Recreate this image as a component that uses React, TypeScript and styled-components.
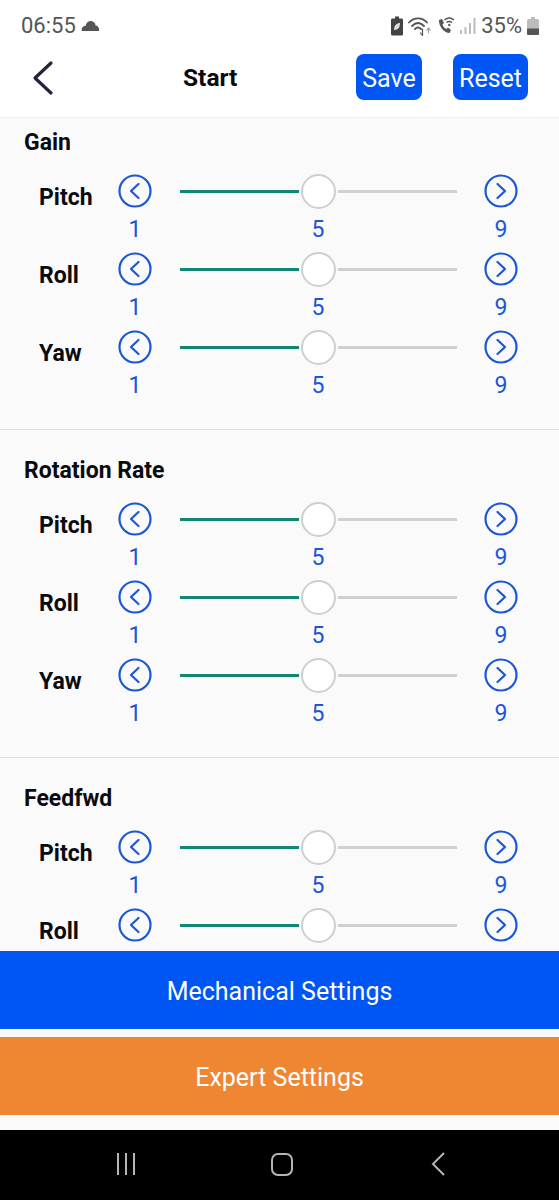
import React from 'react';
import styled, { createGlobalStyle } from 'styled-components';

const GlobalStyle = createGlobalStyle`
  html, body {
    margin: 0;
    padding: 0;
    background: #fafafa;
  }
  * {
    box-sizing: border-box;
  }
`;

const Screen = styled.div`
  width: 559px;
  height: 1200px;
  display: flex;
  flex-direction: column;
  overflow: hidden;
  background: #fafafa;
  font-family: Roboto, 'Liberation Sans', sans-serif;
`;

const StatusBar = styled.div`
  height: 54px;
  flex: none;
  background: #fff;
  display: flex;
  align-items: flex-start;
  justify-content: space-between;
  padding: 13px 20px 0 21px;
  color: #555;
  font-size: 22px;
  line-height: 26px;
`;

const StatusGroup = styled.div`
  display: flex;
  align-items: center;
  gap: 5px;
`;

const Header = styled.div`
  height: 63px;
  flex: none;
  background: #fff;
  display: flex;
  align-items: flex-start;
  padding-left: 30px;
`;

const BackButton = styled.svg`
  width: 26px;
  height: 36px;
  margin-top: 6px;
  flex: none;
`;

const Title = styled.div`
  margin-left: 127px;
  margin-top: 9px;
  width: 60px;
  font-size: 24.5px;
  line-height: 30px;
  font-weight: 700;
  color: #0b0b0f;
`;

const HeaderButton = styled.button<{ $gap: number; $width: number }>`
  margin-left: ${({ $gap }) => $gap}px;
  width: ${({ $width }) => $width}px;
  height: 46px;
  border: 0;
  border-radius: 8px;
  background: #0055f5;
  color: #fff;
  font-family: inherit;
  font-size: 25px;
  padding: 2px 0 0;
`;

const Content = styled.div`
  flex: 1;
  min-height: 0;
  overflow: hidden;
  border-top: 1px solid #f1f1f1;
`;

const Section = styled.section`
  height: 328px;
  padding-top: 28px;
  border-bottom: 1px solid #dedede;

  &:first-child {
    height: 312px;
    padding-top: 12px;
  }
`;

const SectionTitle = styled.div`
  padding-left: 24px;
  height: 26px;
  font-size: 23px;
  line-height: 26px;
  font-weight: 700;
  color: #0b0b0f;
  margin-bottom: 17px;
`;

const Row = styled.div`
  height: 78px;
  display: grid;
  grid-template-columns: 118px 34px 28px 277px 27px 34px;
  grid-template-rows: 36px 42px;
  align-items: center;
`;

const RowLabel = styled.div`
  padding-left: 39px;
  padding-top: 14px;
  font-size: 23px;
  line-height: 28px;
  font-weight: 700;
  color: #0b0b0f;
`;

const RoundIcon = styled.svg<{ $column: number }>`
  grid-column: ${({ $column }) => $column};
  grid-row: 1;
  width: 34px;
  height: 34px;
`;

const Slider = styled.div`
  grid-column: 4;
  grid-row: 1;
  display: flex;
  align-items: center;
  gap: 2px;
`;

const Track = styled.div<{ $filled?: boolean }>`
  flex: 1;
  height: 3px;
  background: ${({ $filled }) => ($filled ? '#128573' : '#d0d0d0')};
`;

const Thumb = styled.div`
  flex: none;
  width: 35px;
  height: 35px;
  border-radius: 50%;
  background: #fff;
  border: 2px solid #cfcfcf;
`;

const Numbers = styled.div`
  grid-column: 2 / 7;
  grid-row: 2;
  display: flex;
  justify-content: space-between;
  align-self: start;
  color: #1a56d6;
  font-size: 23px;
  line-height: 28px;
  margin-top: 7px;
`;

const NumberCell = styled.span`
  width: 34px;
  text-align: center;
`;

const FooterButton = styled.button<{ $color: string }>`
  flex: none;
  display: block;
  width: 100%;
  height: 78px;
  border: 0;
  padding: 2px 0 0;
  background: ${({ $color }) => $color};
  color: #fff;
  font-family: inherit;
  font-size: 25px;
`;

const FooterGap = styled.div<{ $height: number }>`
  flex: none;
  height: ${({ $height }) => $height}px;
  background: #fafafa;
`;

const NavBar = styled.div`
  height: 70px;
  flex: none;
  background: #000;
  display: flex;
  align-items: center;
  padding-bottom: 2px;
`;

const NavSlot = styled.div<{ $offset: number }>`
  flex: none;
  width: 147px;
  margin-left: ${({ $offset }) => $offset}px;
  display: flex;
  justify-content: center;
`;

const CircleChevron = ({ right, column }: { right?: boolean; column: number }) => (
  <RoundIcon $column={column} viewBox="0 0 34 34" fill="none" stroke="#1a56d6">
    <circle cx="17" cy="17" r="15.5" strokeWidth="2.2" />
    <path
      d={right ? 'M13.5 10 L21 17 L13.5 24' : 'M20.5 10 L13 17 L20.5 24'}
      strokeWidth="2.2"
      strokeLinecap="round"
      strokeLinejoin="round"
    />
  </RoundIcon>
);

const AxisRow = ({ label }: { label: string }) => (
  <Row>
    <RowLabel>{label}</RowLabel>
    <CircleChevron column={2} />
    <Slider>
      <Track $filled />
      <Thumb />
      <Track />
    </Slider>
    <CircleChevron column={6} right />
    <Numbers>
      <NumberCell>1</NumberCell>
      <NumberCell>5</NumberCell>
      <NumberCell>9</NumberCell>
    </Numbers>
  </Row>
);

const GainSection = ({ title, axes }: { title: string; axes: string[] }) => (
  <Section>
    <SectionTitle>{title}</SectionTitle>
    {axes.map((axis) => (
      <AxisRow key={axis} label={axis} />
    ))}
  </Section>
);

const CloudIcon = () => (
  <svg width="19" height="12" viewBox="0 0 19 12" fill="#555">
    <path d="M1 11 C0 8 2 6 4.500 6 C5 2.500 8 0.500 10.500 1 C13 1.500 14.500 3.500 14.500 5.500 C17 5.500 18.500 8 18 11 Z" />
  </svg>
);

const SaverIcon = () => (
  <svg width="12" height="20" viewBox="0 0 12 20">
    <path d="M4 0.500 H8 V2.500 H11 Q12 2.500 12 4 V18 Q12 19.500 10.500 19.500 H1.500 Q0 19.500 0 18 V4 Q0 2.500 1 2.500 H4 Z" fill="#444" />
    <path d="M3 14 C3 9 6 7 9 7 C9 11 7.500 14 3 14 Z" fill="#ddd" />
  </svg>
);

const WifiIcon = () => (
  <svg width="24" height="20" viewBox="0 0 24 20" fill="none" stroke="#555" strokeWidth="1.800" strokeLinecap="round">
    <path d="M1 6.500 C6 1 14 1 19 6.500" />
    <path d="M4 10 C8 6 12 6 16 10" />
    <path d="M7 13 C9 11 11 11 13 13" />
    <path d="M14.500 13 V19 M12.500 17 L14.500 19.500" strokeWidth="1.200" />
    <path d="M20.500 17 V12 M18.800 14 L20.500 12 L22.200 14" stroke="#aaa" strokeWidth="1.200" />
  </svg>
);

const WifiCallIcon = () => (
  <svg width="18" height="18" viewBox="0 0 18 18" fill="none">
    <path d="M2 3 L5 2 L7 6 L5.500 7.500 C6 9.500 7.500 11 9.500 12 L11 10.500 L14 13 L12.500 16 C7 16 1.500 9 2 3 Z" fill="#555" />
    <path d="M7.500 3 C10.500 0.500 14 0.500 17 3 M9.500 5.500 C11.500 4 13 4 15 5.500" stroke="#555" strokeWidth="1.500" />
    <circle cx="12.300" cy="8" r="1.200" fill="#555" />
  </svg>
);

const SignalIcon = () => (
  <svg width="16" height="18" viewBox="0 0 16 18" fill="#bbb">
    <rect x="0" y="13" width="2" height="4" />
    <rect x="4.500" y="10" width="2" height="7" />
    <rect x="9" y="6" width="2" height="11" />
    <rect x="13.500" y="1" width="2" height="16" />
  </svg>
);

const BatteryIcon = () => (
  <svg width="12" height="18" viewBox="0 0 12 18">
    <path d="M4 0 H8 V2 H10.500 Q12 2 12 3.500 V16.500 Q12 18 10.500 18 H1.500 Q0 18 0 16.500 V3.500 Q0 2 1.500 2 H4 Z" fill="#bdbdbd" />
    <path d="M0 11.500 H12 V16.500 Q12 18 10.500 18 H1.500 Q0 18 0 16.500 Z" fill="#555" />
  </svg>
);

const NavIcon = ({ children }: { children: React.ReactNode }) => (
  <svg width="24" height="26" viewBox="0 0 24 26" fill="none" stroke="#b5b5b5" strokeWidth="2">
    {children}
  </svg>
);

export default function App() {
  return (
    <Screen>
      <GlobalStyle />
      <StatusBar>
        <StatusGroup>
          <span>06:55</span>
          <CloudIcon />
        </StatusGroup>
        <StatusGroup>
          <SaverIcon />
          <WifiIcon />
          <WifiCallIcon />
          <SignalIcon />
          <span>35%</span>
          <BatteryIcon />
        </StatusGroup>
      </StatusBar>
      <Header>
        <BackButton viewBox="0 0 26 36" fill="none" stroke="#23233a" strokeWidth="3.200">
          <path d="M21 3 L5 18 L21 33" strokeLinecap="round" strokeLinejoin="round" />
        </BackButton>
        <Title>Start</Title>
        <HeaderButton $gap={113} $width={66}>Save</HeaderButton>
        <HeaderButton $gap={31} $width={75}>Reset</HeaderButton>
      </Header>
      <Content>
        <GainSection title="Gain" axes={['Pitch', 'Roll', 'Yaw']} />
        <GainSection title="Rotation Rate" axes={['Pitch', 'Roll', 'Yaw']} />
        <GainSection title="Feedfwd" axes={['Pitch', 'Roll', 'Yaw']} />
      </Content>
      <FooterButton $color="#0055f5">Mechanical Settings</FooterButton>
      <FooterGap $height={8} />
      <FooterButton $color="#ef8632">Expert Settings</FooterButton>
      <FooterGap $height={15} />
      <NavBar>
        <NavSlot $offset={52}>
          <NavIcon>
            <path d="M4 2 V24 M12 2 V24 M20 2 V24" />
          </NavIcon>
        </NavSlot>
        <NavSlot $offset={9}>
          <NavIcon>
            <rect x="2" y="3" width="20" height="21" rx="6" />
          </NavIcon>
        </NavSlot>
        <NavSlot $offset={10}>
          <NavIcon>
            <path d="M17 2 L6 13 L17 24" />
          </NavIcon>
        </NavSlot>
      </NavBar>
    </Screen>
  );
}
